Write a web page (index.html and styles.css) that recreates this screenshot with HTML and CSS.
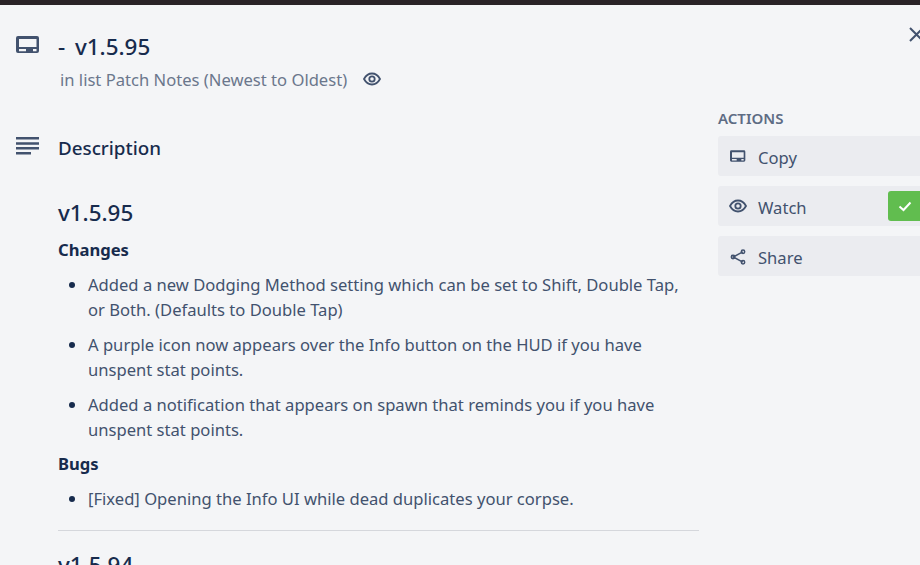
FILE: index.html
```html
<!DOCTYPE html>
<html lang="en">

<head>
    <meta charset="UTF-8" />
    <title>- v1.5.95 | Patch Notes</title>
    <link rel="stylesheet" href="styles.css">
</head>

<body>
    <div class="top-strip"></div>
    <div class="card-window">
        <a class="close-btn" href="#">
            <svg width="18" height="18" viewBox="0 0 18 18"><path d="M3 3 L16 16 M16 3 L3 16" /></svg>
        </a>

        <div class="card-main">
            <!-- Title -->
            <div class="card-head">
                <svg class="head-icon card-icon" width="24" height="24" viewBox="0 0 24 24">
                    <path fill-rule="evenodd" d="M2 2h19a2 2 0 0 1 2 2v13a2 2 0 0 1-2 2H2a2 2 0 0 1-2-2V4a2 2 0 0 1 2-2zM3 5v8h17.500V5zM3 15v2.300h7V15zM17 15v2.300h3.500V15z" />
                </svg>
                <div>
                    <h1>- v1.5.95</h1>
                    <p class="in-list">in list Patch Notes (Newest to Oldest)
                        <svg class="eye" width="18" height="18" viewBox="0 0 18 18">
                            <path d="M1 9c2-3.600 4.800-5.500 8-5.500s6 1.900 8 5.500c-2 3.600-4.800 5.500-8 5.500S3 12.600 1 9z" />
                            <circle cx="9" cy="9" r="2.700" />
                        </svg>
                    </p>
                </div>
            </div>

            <!-- Description -->
            <div class="desc-head">
                <svg class="head-icon" width="24" height="24" viewBox="0 0 24 24">
                    <path d="M0 1h23v2.500H0zM0 6.300h23v2.500H0zM0 11h23v2.500H0zM0 16h15v2.500H0z" />
                </svg>
                <h2>Description</h2>
            </div>

            <div class="desc-body">
                <h3>v1.5.95</h3>
                <h4>Changes</h4>
                <ul>
                    <li>Added a new Dodging Method setting which can be set to Shift, Double Tap, or Both. (Defaults to Double Tap)</li>
                    <li>A purple icon now appears over the Info button on the HUD if you have unspent stat points.</li>
                    <li>Added a notification that appears on spawn that reminds you if you have unspent stat points.</li>
                </ul>
                <h4>Bugs</h4>
                <ul>
                    <li>[Fixed] Opening the Info UI while dead duplicates your corpse.</li>
                </ul>
                <hr>
                <h3>v1.5.94</h3>
            </div>
        </div>

        <div class="card-side">
            <h5>ACTIONS</h5>
            <a class="side-btn" href="#">
                <svg width="16" height="16" viewBox="0 0 24 24">
                    <path fill-rule="evenodd" d="M2 2h19a2 2 0 0 1 2 2v13a2 2 0 0 1-2 2H2a2 2 0 0 1-2-2V4a2 2 0 0 1 2-2zM3 5v8h17.500V5zM3 15v2.300h7V15zM17 15v2.300h3.500V15z" />
                </svg>
                Copy
            </a>
            <a class="side-btn" href="#">
                <svg class="eye" width="18" height="18" viewBox="0 0 18 18">
                    <path d="M1 9c2-3.600 4.800-5.500 8-5.500s6 1.900 8 5.500c-2 3.600-4.800 5.500-8 5.500S3 12.600 1 9z" />
                    <circle cx="9" cy="9" r="2.700" />
                </svg>
                Watch
                <span class="check-badge">
                    <svg width="14" height="14" viewBox="0 0 14 14"><path d="M1.500 7.500 L5.500 11 L12.500 3.500" /></svg>
                </span>
            </a>
            <a class="side-btn" href="#">
                <svg class="share" width="16" height="16" viewBox="0 0 16 16">
                    <path d="M12.800 2.800 L3.200 8 L12.800 13.200" />
                    <circle cx="13" cy="2.800" r="1.700" />
                    <circle cx="3" cy="8" r="1.700" />
                    <circle cx="13" cy="13.200" r="1.700" />
                </svg>
                Share
            </a>
        </div>
    </div>
</body>

</html>
```

FILE: styles.css
```css
html,
body {
    height: 100%;
    overflow: hidden;
}

body {
    margin: 0;
    font-family: "Noto Sans", "Open Sans", sans-serif;
    font-size: 16.6px;
    line-height: 25px;
    color: #172b4d;
    background: #f4f5f7;
}

.top-strip {
    height: 5px;
    background: #2a2327;
}

.card-window {
    position: relative;
    display: flex;
    width: 920px;
    overflow: hidden;
}

.close-btn {
    position: absolute;
    left: 907px;
    top: 20px;
    line-height: 0;
}

.close-btn path {
    fill: none;
    stroke: #42526e;
    stroke-width: 2;
}

.card-main {
    width: 699px;
    flex: none;
}

.head-icon {
    flex: none;
    margin-right: 18px;
    fill: #42526e;
}

.card-icon {
    margin-top: 5px;
}

.card-head {
    display: flex;
    padding: 24px 0 0 16px;
}

.card-head h1 {
    margin: 0;
    font-size: 22.4px;
    line-height: 36px;
    font-weight: 500;
    word-spacing: 4px;
    color: #172b4d;
}

.in-list {
    display: flex;
    align-items: center;
    margin: 0 0 2px 2px;
    height: 28px;
    color: #6b778c;
}

.eye {
    fill: none;
    stroke: #42526e;
    stroke-width: 1.800;
}

.in-list .eye {
    margin: 0 0 0 16px;
}

.desc-head {
    display: flex;
    align-items: center;
    margin-top: 39px;
    padding-left: 16px;
}

.desc-head h2 {
    margin: 0;
    font-size: 18.800px;
    line-height: 28px;
    font-weight: 500;
}

.desc-body {
    margin-left: 58px;
    margin-top: 33px;
    color: #42526e;
}

.desc-body h3 {
    margin: 0 0 7px;
    font-size: 22.4px;
    line-height: 36px;
    font-weight: 500;
    color: #172b4d;
}

.desc-body h4 {
    margin: 0;
    font-size: 16.6px;
    line-height: 24px;
    font-weight: 700;
    color: #172b4d;
}

.desc-body ul + h4 {
    margin-top: 2px;
}

.desc-body ul {
    margin: 10px 0 0;
    padding: 0 0 0 30px;
}

.desc-body li {
    margin-bottom: 10px;
}

.desc-body li::marker {
    color: #172b4d;
}

.desc-body hr {
    margin: 19px 0 16px;
    border: none;
    border-top: 1px solid #d5d7dc;
}

.card-side {
    flex: 1;
    margin-left: 19px;
    padding-top: 101px;
}

.card-side h5 {
    margin: 0 0 6px;
    font-size: 15px;
    line-height: 24px;
    font-weight: 600;
    color: #5e6c84;
}

.side-btn {
    display: flex;
    align-items: center;
    box-sizing: border-box;
    height: 40px;
    margin-bottom: 10px;
    padding: 2px 0 0 12px;
    border-radius: 3px 0 0 3px;
    background: #ebecf0;
    color: #42526e;
    text-decoration: none;
}

.side-btn > svg {
    flex: none;
    margin-right: 12px;
    fill: #42526e;
}

.side-btn > .eye {
    fill: none;
    margin: -2px 11px 0 -1px;
}

.side-btn > .share {
    fill: none;
    stroke: #42526e;
    stroke-width: 1.500;
}

.check-badge {
    flex: 1;
    display: flex;
    align-items: center;
    height: 30px;
    margin: -2px 0 0 81px;
    padding-left: 10px;
    border-radius: 3px 0 0 3px;
    background: #61bd4f;
    line-height: 0;
}

.check-badge path {
    fill: none;
    stroke: #fff;
    stroke-width: 2;
}
```
